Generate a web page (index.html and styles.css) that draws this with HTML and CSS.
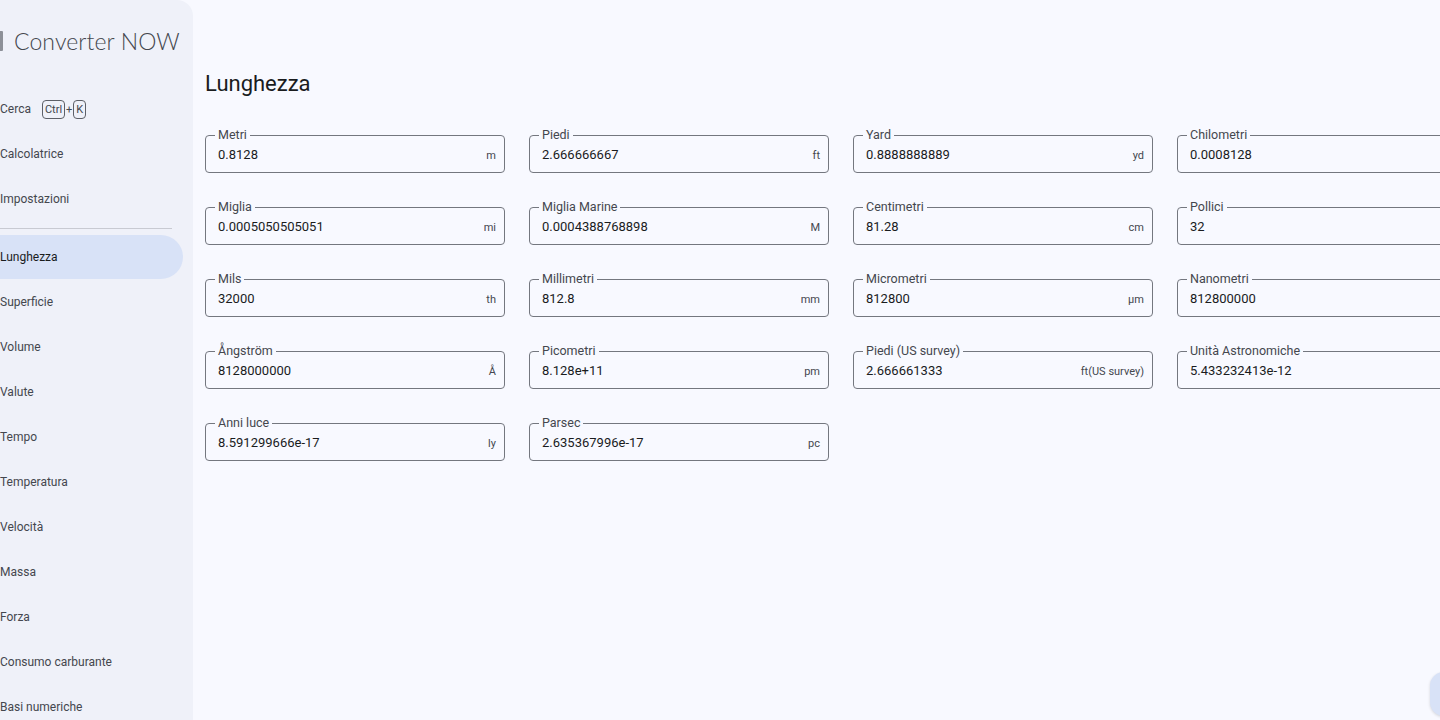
FILE: index.html
```html
<!DOCTYPE html>
<html lang="it">
<head>
<meta charset="utf-8">
<title>Converter NOW</title>
<link rel="stylesheet" href="styles.css">
</head>
<body>
<div class="app">
  <aside class="sidebar">
    <div class="brand"><span class="logo"></span><span class="brand-name">Converter NOW</span></div>
    <nav class="nav">
      <div class="item">Cerca <span class="keys"><span class="kbd">Ctrl</span>+<span class="kbd">K</span></span></div>
      <div class="item">Calcolatrice</div>
      <div class="item">Impostazioni</div>
      <div class="divider"></div>
      <div class="item active"><span class="pill">Lunghezza</span></div>
      <div class="item">Superficie</div>
      <div class="item">Volume</div>
      <div class="item">Valute</div>
      <div class="item">Tempo</div>
      <div class="item">Temperatura</div>
      <div class="item">Velocità</div>
      <div class="item">Massa</div>
      <div class="item">Forza</div>
      <div class="item">Consumo carburante</div>
      <div class="item">Basi numeriche</div>
    </nav>
  </aside>
  <main class="main">
    <h1 class="title">Lunghezza</h1>
    <div class="grid">
      <div class="field"><span class="label">Metri</span><span class="value">0.8128</span><span class="unit">m</span></div>
      <div class="field"><span class="label">Piedi</span><span class="value">2.666666667</span><span class="unit">ft</span></div>
      <div class="field"><span class="label">Yard</span><span class="value">0.8888888889</span><span class="unit">yd</span></div>
      <div class="field"><span class="label">Chilometri</span><span class="value">0.0008128</span></div>
      <div class="field"><span class="label">Miglia</span><span class="value">0.0005050505051</span><span class="unit">mi</span></div>
      <div class="field"><span class="label">Miglia Marine</span><span class="value">0.0004388768898</span><span class="unit">M</span></div>
      <div class="field"><span class="label">Centimetri</span><span class="value">81.28</span><span class="unit">cm</span></div>
      <div class="field"><span class="label">Pollici</span><span class="value">32</span></div>
      <div class="field"><span class="label">Mils</span><span class="value">32000</span><span class="unit">th</span></div>
      <div class="field"><span class="label">Millimetri</span><span class="value">812.8</span><span class="unit">mm</span></div>
      <div class="field"><span class="label">Micrometri</span><span class="value">812800</span><span class="unit">µm</span></div>
      <div class="field"><span class="label">Nanometri</span><span class="value">812800000</span></div>
      <div class="field"><span class="label">Ångström</span><span class="value">8128000000</span><span class="unit">Å</span></div>
      <div class="field"><span class="label">Picometri</span><span class="value">8.128e+11</span><span class="unit">pm</span></div>
      <div class="field"><span class="label">Piedi (US survey)</span><span class="value">2.666661333</span><span class="unit">ft(US survey)</span></div>
      <div class="field"><span class="label">Unità Astronomiche</span><span class="value">5.433232413e-12</span></div>
      <div class="field"><span class="label">Anni luce</span><span class="value">8.591299666e-17</span><span class="unit">ly</span></div>
      <div class="field"><span class="label">Parsec</span><span class="value">2.635367996e-17</span><span class="unit">pc</span></div>
    </div>
  </main>
  <div class="fab"></div>
</div>
</body>
</html>
```
FILE: styles.css
```css
html, body {
  margin: 0;
  padding: 0;
  width: 1440px;
  height: 720px;
  overflow: hidden;
  background: #f8f9ff;
  font-family: Roboto, "Noto Sans", sans-serif;
  color: #1a1c1e;
}

.app {
  display: flex;
  width: 1440px;
  height: 720px;
  position: relative;
  overflow: hidden;
}

.sidebar {
  flex: 0 0 193px;
  width: 193px;
  height: 760px;
  background: #eff1f9;
  border-top-right-radius: 16px;
  display: flex;
  flex-direction: column;
  white-space: nowrap;
}

.brand {
  height: 86px;
  display: flex;
  align-items: center;
  gap: 11px;
  box-sizing: border-box;
}

.logo {
  width: 3px;
  height: 20px;
  background: #8d9098;
  border-radius: 0 1px 1px 0;
  margin-top: -4px;
}

.brand-name {
  font-family: Lato, "Open Sans", sans-serif;
  font-weight: 300;
  font-size: 23px;
  letter-spacing: 0.1px;
  color: #44474e;
  margin-top: -4px;
}

.nav {
  display: flex;
  flex-direction: column;
  padding-top: 0.5px;
}

.item {
  height: 45px;
  display: flex;
  align-items: center;
  font-size: 12px;
  color: #44474e;
}

.keys {
  display: inline-flex;
  align-items: center;
  margin-left: 11px;
  font-size: 11px;
  gap: 1px;
}

.kbd {
  border: 1px solid #5d6068;
  border-radius: 4px;
  padding: 0 2px;
  height: 17px;
  line-height: 17px;
  font-size: 11px;
}

.divider {
  height: 13px;
  display: flex;
  align-items: center;
  margin-right: 21px;
}

.divider::before {
  content: "";
  flex: 1;
  height: 1px;
  background: #c8cad2;
}

.item.active {
  margin-right: 10px;
}

.pill {
  flex: 1;
  height: 44px;
  display: flex;
  align-items: center;
  background: #d8e2f7;
  border-radius: 0 22px 22px 0;
  color: #1a1c1e;
}

.main {
  flex: 1;
  padding: 70px 0 0 12px;
  min-width: 0;
}

.title {
  margin: 0 0 37px 0;
  font-size: 22px;
  font-weight: 400;
  line-height: 28px;
  color: #1a1c1e;
}

.grid {
  display: grid;
  grid-template-columns: repeat(4, 300px);
  column-gap: 24px;
  row-gap: 34px;
}

.field {
  position: relative;
  height: 38px;
  box-sizing: border-box;
  border: 1px solid #74777f;
  border-radius: 4px;
  display: flex;
  align-items: center;
  padding: 0 8px 0 12px;
}

.label {
  position: absolute;
  top: -8px;
  left: 9px;
  padding: 0 3px;
  background: #f8f9ff;
  font-size: 12.5px;
  line-height: 14px;
  color: #44474e;
}

.value {
  flex: 1;
  font-size: 13px;
  color: #1a1c1e;
  padding-top: 1px;
}

.unit {
  font-size: 11px;
  color: #44474e;
  padding-top: 2px;
}

.fab {
  position: absolute;
  left: 1430px;
  top: 672px;
  width: 56px;
  height: 44px;
  border-radius: 14px;
  background: #d8e2f7;
  box-shadow: 0 1px 3px rgba(0,0,0,0.15);
}
```
